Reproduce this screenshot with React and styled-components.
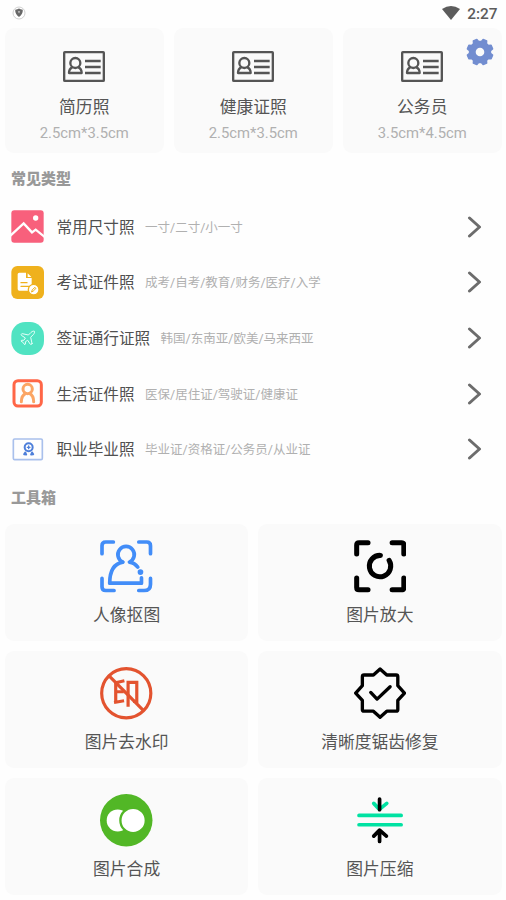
import React from "react"
import styled, { createGlobalStyle } from "styled-components"
import { Plane } from "lucide-react"

const GlobalStyle = createGlobalStyle`
  * {
    box-sizing: border-box;
  }
  body {
    margin: 0;
    background: #fff;
    font-family: Roboto, "Noto Sans CJK SC", sans-serif;
  }
`

const Page = styled.div`
  width: 506px;
  height: 900px;
  overflow: hidden;
  background: #fefefe;
  position: relative;
`

const StatusBar = styled.header`
  height: 28px;
  padding: 0 8.5px 2px 12px;
  display: flex;
  align-items: center;
`

const Clock = styled.span`
  margin: 1px 0 0 7px;
  color: #5c5c5c;
  font-size: 15.4px;
  font-weight: 500;
  line-height: 20px;
`

const Spacer = styled.div`
  flex: 1;
`

const Settings = styled.button`
  position: absolute;
  top: 38px;
  right: 12px;
  width: 28px;
  height: 28px;
  padding: 0;
  border: none;
  background: none;
`

const SizeCards = styled.section`
  display: grid;
  grid-template-columns: repeat(3, 1fr);
  gap: 10.5px;
  padding: 0 4.5px 0 5px;
`

const Card = styled.div`
  display: flex;
  flex-direction: column;
  align-items: center;
  background: #fafafa;
  border-radius: 9px;
`

const SizeCard = styled(Card)`
  height: 125px;
  padding-top: 23px;
`

const CardTitle = styled.div`
  margin-top: ${props => props.$gap}px;
  color: #555;
  font-size: 16.8px;
  line-height: 24px;
  white-space: nowrap;
`

const Dimensions = styled.div`
  margin-top: 4px;
  color: #b0b0b0;
  font-size: 14.8px;
  line-height: 20px;
`

const SectionTitle = styled.h2`
  margin: 0;
  padding-left: 11px;
  height: ${props => props.$height}px;
  color: #999;
  font-size: 15px;
  font-weight: 900;
  line-height: ${props => props.$line}px;
`

const TypeList = styled.ul`
  margin: 0;
  padding: 0;
  list-style: none;
`

const TypeRow = styled.li`
  height: 55.65px;
  padding: 0 24px 0 11px;
  display: flex;
  align-items: center;
`

const RowTitle = styled.span`
  margin-left: 12.5px;
  padding-top: 1.6px;
  color: #505050;
  font-size: 15.6px;
  line-height: 22px;
`

const RowHint = styled.span`
  margin-left: 10.5px;
  padding-top: 1.6px;
  color: #b0b0b0;
  font-size: 12.5px;
  line-height: 18px;
`

const Tools = styled.section`
  display: grid;
  grid-template-columns: repeat(2, 1fr);
  gap: 10.6px 10px;
  padding: 0 4.5px 0 5px;
`

const ToolCard = styled(Card)`
  height: 116.4px;
  padding-top: 16px;
`

const gearPath = () => {
  const points = []
  for (let i = 0; i < 8; i++) {
    const mid = 22.5 + i * 45
    const corners = [[-15, 10.6], [-8.5, 13], [8.5, 13], [15, 10.6]]
    corners.forEach(([offset, r]) => {
      const a = ((mid + offset) * Math.PI) / 180
      points.push(`${(14 + r * Math.cos(a)).toFixed(2)} ${(14 + r * Math.sin(a)).toFixed(2)}`)
    })
  }
  return `M${points.join("L")}Z`
}

const GearIcon = () => (
  <svg width="28" height="28" viewBox="0 0 28 28">
    <path d={gearPath()} fill="#728dd0" stroke="#728dd0" strokeWidth="1.4" strokeLinejoin="round" />
    <circle cx="14" cy="14" r="4.3" fill="#fafafa" />
  </svg>
)

const ShieldIcon = () => (
  <svg width="14" height="14" viewBox="0 0 14 14">
    <circle cx="7" cy="7" r="6" fill="#fff" stroke="#c4c4c4" strokeWidth="0.8" />
    <path d="M3.2 3.8Q5.6 3.6 7 2.6Q8.4 3.6 10.8 3.8Q11 8.2 7 11Q3 8.2 3.2 3.8Z" fill="#686868" />
    <path d="M5.8 5.2H8.2L7 7.6Z" fill="#ccc" />
  </svg>
)

const WifiIcon = () => (
  <svg width="18" height="14" viewBox="0 0 18 14">
    <path d="M0 3Q9-3 18 3L9 14Z" fill="#5c5c5c" />
  </svg>
)

const IdCardIcon = () => (
  <svg width="42" height="31" viewBox="0 0 126 93" fill="none" stroke="#555" strokeWidth="7">
    <rect x="3.5" y="3.5" width="119" height="86" rx="2" />
    <circle cx="37" cy="36" r="15" />
    <path d="M28 49Q18 53 18 66H56Q56 53 46 49" strokeLinejoin="round" />
    <path d="M66 30H113M66 48H113M66 66H113" />
  </svg>
)

const ChevronIcon = () => (
  <svg width="15" height="22" viewBox="0 0 15 22" fill="none" stroke="#6c6c6c" strokeWidth="3" strokeLinecap="round" strokeLinejoin="round">
    <path d="M2.5 2L12.5 11L2.5 20" />
  </svg>
)

const RowIcon = ({ children }) => (
  <svg width="33" height="33" viewBox="0 0 99 99" fill="none" strokeLinecap="round" strokeLinejoin="round">
    {children}
  </svg>
)

const PhotoIcon = () => (
  <RowIcon>
    <rect x="1" y="1" width="97" height="97" rx="9" fill="#f8607c" />
    <path d="M-1 76L38 40L63 67L74 59L100 80" stroke="#fff" strokeWidth="7" strokeLinejoin="miter" />
    <circle cx="74" cy="24" r="8" fill="#fff" />
  </RowIcon>
)

const ExamIcon = () => (
  <RowIcon>
    <rect x="1" y="0" width="98" height="99" rx="18" fill="#efb11d" />
    <path d="M25 20H45V36H62V74H25Q20 74 20 69V25Q20 20 25 20Z" fill="#fff" />
    <path d="M50 22L61 33H50Z" fill="#fff" />
    <path d="M30 50H48M30 61H54" stroke="#efb11d" strokeWidth="4" />
    <circle cx="68" cy="71" r="16" fill="#fff" stroke="#efb11d" strokeWidth="4" />
    <path d="M62 77L64 71L72 64L75 67L67 75Z" stroke="#efb11d" strokeWidth="3" />
  </RowIcon>
)

const VisaIcon = () => (
  <RowIcon>
    <rect x="1" y="0" width="98" height="99" rx="42" fill="#50e3c2" />
    <Plane x={23} y={21} size={54} color="#e9fffa" strokeWidth={1.3} />
  </RowIcon>
)

const LifeIcon = () => (
  <RowIcon>
    <rect x="9" y="11" width="82" height="76" rx="12" stroke="#ff6647" strokeWidth="9" />
    <circle cx="50" cy="36" r="14" stroke="#fba564" strokeWidth="9" />
    <path d="M31 74Q31 56 44 49M56 49Q68 56 68 74" stroke="#fba564" strokeWidth="9" />
  </RowIcon>
)

const JobIcon = () => (
  <RowIcon>
    <rect x="7" y="18" width="87" height="62" rx="4" stroke="#a9c0ec" strokeWidth="5" />
    <circle cx="53" cy="43" r="12" stroke="#4e7fda" strokeWidth="6" />
    <path d="M53 39V47M49 43H57" stroke="#4e7fda" strokeWidth="4" />
    <path d="M43 58L39 64L46 65ZM63 58L67 64L60 65Z" fill="#4e7fda" stroke="#4e7fda" strokeWidth="5" />
  </RowIcon>
)

const ToolIcon = ({ children, ...rest }) => (
  <svg width="52.5" height="52.5" viewBox="0 0 157 157" fill="none" strokeLinecap="round" strokeLinejoin="round" {...rest}>
    {children}
  </svg>
)

const CutoutIcon = () => (
  <ToolIcon stroke="#428df8" strokeWidth="11">
    <path d="M6 41V17Q6 6 17 6H40M116 6H140Q151 6 151 17V41M6 115V140Q6 151 17 151H42M151 115V132Q151 151 132 151H116" />
    <path d="M68 66A24.5 24.5 0 1 1 88 66Q103 68 113 81" />
    <path d="M68 66C40 71 29 94 29 129H124V113" />
    <circle cx="121" cy="96" r="8.5" fill="#428df8" stroke="none" />
  </ToolIcon>
)

const EnlargeIcon = () => (
  <ToolIcon stroke="#000" strokeWidth="15">
    <path d="M8 42V15Q8 8 15 8H42M114 8H142Q149 8 149 15V42M8 114V142Q8 149 15 149H42M149 114V142Q149 149 142 149H114" />
    <path d="M79 46A32 32 0 1 0 105 61" />
  </ToolIcon>
)

const WatermarkIcon = () => (
  <ToolIcon stroke="#e3532f" strokeWidth="9.5" strokeLinecap="butt" strokeLinejoin="miter">
    <circle cx="78.5" cy="78.5" r="73.5" />
    <path d="M25 24L131 131" />
    <path d="M73 41L47 47V106M47 74H71M42 106L72 101" />
    <path d="M84 119V46H110V103H99" />
  </ToolIcon>
)

const RepairIcon = () => (
  <ToolIcon stroke="#000" strokeWidth="10">
    <path d="M78 6L98 24H126Q131 24 131 29V56L151 78L131 100V127Q131 132 126 132H98L78 150L58 132H30Q25 132 25 127V100L5 78L25 56V29Q25 24 30 24H58Z" />
    <path d="M50 76L69 96L108 59" />
  </ToolIcon>
)

const MergeIcon = () => (
  <ToolIcon>
    <circle cx="78.5" cy="78.5" r="78.5" fill="#52b726" />
    <circle cx="53" cy="79" r="33" fill="#fff" />
    <circle cx="99" cy="79" r="38" fill="#fff" stroke="#52b726" strokeWidth="7" />
  </ToolIcon>
)

const CompressIcon = () => (
  <ToolIcon strokeWidth="11">
    <path d="M59 28L76 46L98 28M15 64H141M15 92H141" stroke="#00e2a2" />
    <path d="M76.5 15V47M76.5 142V109M59 126L76.5 108L97 126" stroke="#000" />
  </ToolIcon>
)

const sizes = [
  { title: "简历照", dimensions: "2.5cm*3.5cm" },
  { title: "健康证照", dimensions: "2.5cm*3.5cm" },
  { title: "公务员", dimensions: "3.5cm*4.5cm" },
]

const types = [
  { icon: PhotoIcon, title: "常用尺寸照", hint: "一寸/二寸/小一寸" },
  { icon: ExamIcon, title: "考试证件照", hint: "成考/自考/教育/财务/医疗/入学" },
  { icon: VisaIcon, title: "签证通行证照", hint: "韩国/东南亚/欧美/马来西亚" },
  { icon: LifeIcon, title: "生活证件照", hint: "医保/居住证/驾驶证/健康证" },
  { icon: JobIcon, title: "职业毕业照", hint: "毕业证/资格证/公务员/从业证" },
]

const tools = [
  { icon: CutoutIcon, title: "人像抠图" },
  { icon: EnlargeIcon, title: "图片放大" },
  { icon: WatermarkIcon, title: "图片去水印" },
  { icon: RepairIcon, title: "清晰度锯齿修复" },
  { icon: MergeIcon, title: "图片合成" },
  { icon: CompressIcon, title: "图片压缩" },
]

const App = () => (
  <Page>
    <GlobalStyle />
    <StatusBar>
      <ShieldIcon />
      <Spacer />
      <WifiIcon />
      <Clock>2:27</Clock>
    </StatusBar>
    <SizeCards>
      {sizes.map(size => (
        <SizeCard key={size.title}>
          <IdCardIcon />
          <CardTitle $gap={13}>{size.title}</CardTitle>
          <Dimensions>{size.dimensions}</Dimensions>
        </SizeCard>
      ))}
    </SizeCards>
    <SectionTitle $height={46} $line={53}>常见类型</SectionTitle>
    <TypeList>
      {types.map(({ icon: Icon, title, hint }) => (
        <TypeRow key={title}>
          <Icon />
          <RowTitle>{title}</RowTitle>
          <RowHint>{hint}</RowHint>
          <Spacer />
          <ChevronIcon />
        </TypeRow>
      ))}
    </TypeList>
    <SectionTitle $height={47} $line={43}>工具箱</SectionTitle>
    <Tools>
      {tools.map(({ icon: Icon, title }) => (
        <ToolCard key={title}>
          <Icon />
          <CardTitle $gap={10.1}>{title}</CardTitle>
        </ToolCard>
      ))}
    </Tools>
    <Settings aria-label="设置">
      <GearIcon />
    </Settings>
  </Page>
)

export default App
